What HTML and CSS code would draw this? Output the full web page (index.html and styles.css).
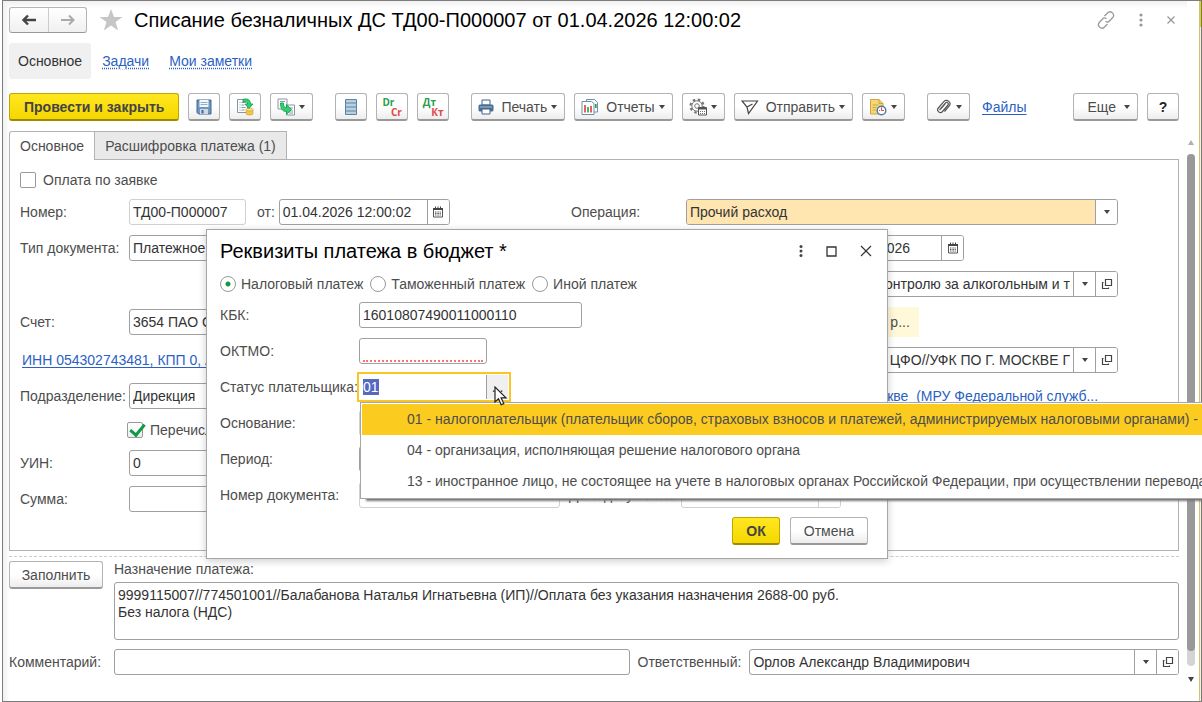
FILE: index.html
```html
<!DOCTYPE html>
<html lang="ru">
  <head>
    <meta charset="utf-8">
    <meta name="viewport" content="width=device-width, initial-scale=1">
    <title>Списание безналичных ДС</title>
    <link rel="stylesheet" href="styles.css">
  </head>

  <body>
    <!-- Shared icons -->
    <svg class="sprite" aria-hidden="true">
      <symbol id="calendar" viewBox="0 0 12 12">
        <path d="M1.500 2.500h9v8.500h-9z" fill="#fff" stroke="#555"/>
        <path d="M1 3h10" stroke="#444" stroke-width="2"/>
        <path d="M3.500 .5v2M6 .5v2M8.500 .5v2" stroke="#444"/>
        <path d="M3 6h6M3 7.500h6M3 9h6" stroke="#555" stroke-dasharray="1 .6"/>
      </symbol>
      <symbol id="open" viewBox="0 0 12 12">
        <path d="M4.500 1.500h6v6h-6zM2.500 4.500h-1v6h6v-1" fill="none" stroke="#444" stroke-width="1.200"/>
      </symbol>
    </svg>

    <div class="window">
      <div class="main">
        <!-- Title -->
        <header class="title-bar">
          <div class="history">
            <button type="button" aria-label="Назад">
              <svg width="16" height="12" viewBox="0 0 16 12"><path d="M15 6H3M7 1.500L2.500 6 7 10.500" fill="none" stroke="#444" stroke-width="2.400"/></svg>
            </button>
            <button type="button" aria-label="Вперед">
              <svg width="16" height="12" viewBox="0 0 16 12"><path d="M1 6h12M9 1.500L13.500 6 9 10.500" fill="none" stroke="#aaa" stroke-width="2"/></svg>
            </button>
          </div>
          <svg class="star" width="24" height="22" viewBox="0 0 24 22"><path d="M12 0l3 8h8.500l-7 5 2.700 8.500L12 16.500l-7.200 5L7.500 13l-7-5H9z" fill="#c4c6c8"/></svg>
          <h1>Списание безналичных ДС ТД00-П000007 от 01.04.2026 12:00:02</h1>
          <div class="title-tools">
            <button type="button" aria-label="Ссылка">
              <svg width="18" height="18" viewBox="0 0 18 18" fill="none" stroke="#999" stroke-width="1.300"><path d="M7.500 5l3-3a3.200 3.200 0 0 1 5 4.800L12.500 10a3 3 0 0 1-4 .3M10.500 13l-3 3a3.200 3.200 0 0 1-5-4.800L5.500 8a3 3 0 0 1 4-.3"/></svg>
            </button>
            <button type="button" aria-label="Меню">
              <svg width="4" height="14" viewBox="0 0 4 14" fill="#999"><circle cx="2" cy="2" r="1.600"/><circle cx="2" cy="7" r="1.600"/><circle cx="2" cy="12" r="1.600"/></svg>
            </button>
            <button type="button" aria-label="Закрыть">
              <svg width="8" height="8" viewBox="0 0 8 8"><path d="M.5.5l7 7M7.500.5l-7 7" stroke="#999" stroke-width="1.300"/></svg>
            </button>
          </div>
        </header>

        <nav class="sections">
          <a class="active" href="#main">Основное</a>
          <a href="#tasks">Задачи</a>
          <a href="#notes">Мои заметки</a>
        </nav>

        <!-- Command bar -->
        <div class="toolbar">
          <button type="button" class="btn primary">Провести и закрыть</button>
          <button type="button" class="btn icon" aria-label="Записать">
            <svg width="16" height="16" viewBox="0 0 16 16"><path d="M1 1h14v14H2.500L1 13.500z" fill="#6f97c2" stroke="#41668f"/><path d="M3.500 1h9v7h-9z" fill="#f4f7fa"/><path d="M4.500 3.500h7M4.500 5.500h7" stroke="#8fb0cc"/><path d="M4 10h8v5H4z" fill="#cfd9e2"/><path d="M5.500 11h2v3.500h-2z" fill="#41668f"/></svg>
          </button>
          <button type="button" class="btn icon" aria-label="Провести">
            <svg width="18" height="18" viewBox="0 0 18 18"><path d="M1.500 1.500h10v13h-10z" fill="#fff" stroke="#8995a0"/><path d="M3.500 4.500h1M5.500 4.500h4M3.500 7h1M5.500 7h3M3.500 9.500h1M5.500 9.500h4M3.500 12h1M5.500 12h3" stroke="#8995a0"/><path d="M10 11.500v4c0 2 7 2 7 0v-4" fill="#f3c647" stroke="#c99a2c" stroke-width=".6"/><ellipse cx="13.500" cy="11.500" rx="3.500" ry="1.500" fill="#fbe08a" stroke="#c99a2c" stroke-width=".6"/><path d="M7 1.500c4-1.500 7.500 0 7.500 4.500H17l-4 4.500L9 6h2.500C11.500 4 10 3.500 7 4z" fill="#2fd070" stroke="#129a48" stroke-width=".8"/></svg>
          </button>
          <button type="button" class="btn menu" aria-label="Создать на основании">
            <svg width="18" height="18" viewBox="0 0 18 18"><path d="M1 1h9v10H1z" fill="#fff" stroke="#8995a0"/><path d="M3 3.500h5M3 5.500h3" stroke="#8995a0"/><path d="M9.500 7h8v10h-8z" fill="#fff" stroke="#8995a0"/><path d="M12 10h4M13 13h3M12 15h4" stroke="#8995a0"/><path d="M3.500 5h3c0 3 .5 4.500 3 4.500V6.500l5 5-5 5v-3C5.500 13.500 3.500 11 3.500 5z" fill="#2fd070" stroke="#129a48" stroke-width=".8"/></svg>
          </button>
          <button type="button" class="btn icon group" aria-label="Движения документа">
            <svg width="12" height="16" viewBox="0 0 12 16"><path d="M.5.5h11v15H.5z" fill="#b9d0e0" stroke="#5c83a3"/><path d="M1 4h10M1 8h10M1 12h10" stroke="#5c83a3"/></svg>
          </button>
          <button type="button" class="btn icon pair" aria-label="Dr Cr"><span>Dr</span><span>Cr</span></button>
          <button type="button" class="btn icon pair" aria-label="Дт Кт"><span>Дт</span><span>Кт</span></button>
          <button type="button" class="btn menu group">
            <svg width="16" height="16" viewBox="0 0 16 16"><path d="M4 1h8v5H4z" fill="#fff" stroke="#3f6284"/><rect x=".5" y="5.500" width="15" height="7" rx="1.500" fill="#4a6f96"/><path d="M2 8h12" stroke="#a9c2d9"/><path d="M4 10h8v5H4z" fill="#fff" stroke="#3f6284"/></svg>
            <span>Печать</span>
          </button>
          <button type="button" class="btn menu">
            <svg width="18" height="16" viewBox="0 0 18 16"><path d="M5.500 .5h8l3 3V13h-11z" fill="#fff" stroke="#6f8ea8"/><path d="M1 2.500h9.500l2.500 2v11H1z" fill="#fff" stroke="#6f8ea8"/><path d="M4 6v7.500" stroke="#e03a3a" stroke-width="1.600"/><path d="M7 8v5.500M14.800 5v4" stroke="#1fa04a" stroke-width="1.600"/><path d="M10 7v6.500" stroke="#e03a3a" stroke-width="1.600"/></svg>
            <span>Отчеты</span>
          </button>
          <button type="button" class="btn menu" aria-label="Настройки">
            <svg width="18" height="18" viewBox="0 0 18 18" fill="none" stroke="#777"><circle cx="8" cy="8" r="6.500" stroke-width="2.200" stroke-dasharray="2.550 2.550"/><circle cx="8" cy="8" r="5.200" fill="#fff"/><circle cx="8" cy="8" r="2.300"/><path d="M9.500 9.500h8v7.500h-8z" fill="#fff" stroke="#555"/><path d="M9.500 10.500h8" stroke="#555" stroke-width="2"/><path d="M11 13.500h5.500M11 15.500h5.500" stroke-dasharray="1 1"/></svg>
          </button>
          <button type="button" class="btn menu">
            <svg width="18" height="16" viewBox="0 0 18 16" fill="none" stroke="#444" stroke-width="1.200"><path d="M1 2h15.500L7.500 14.500 6 8zM6 8l5.500-3"/></svg>
            <span>Отправить</span>
          </button>
          <button type="button" class="btn menu" aria-label="Напоминание">
            <svg width="18" height="18" viewBox="0 0 18 18"><path d="M1.500 1.500h8.500l4 4v10.500H1.500z" fill="#f6d778" stroke="#cfa53c"/><path d="M10 1.500v4h4M3.500 7h6M3.500 9.500h4M3.500 12h3" fill="none" stroke="#cfa53c"/><circle cx="12.500" cy="12.500" r="4.300" fill="#fff" stroke="#4a79a8" stroke-width="1.400"/><path d="M12.500 9.500v3h2.500M10 12.500h1" fill="none" stroke="#e04040"/></svg>
          </button>
          <button type="button" class="btn menu group" aria-label="Присоединить">
            <svg width="18" height="16" viewBox="0 0 18 16" fill="none" stroke="#555" stroke-width="1.200"><path d="M5.500 11l6-7a1.600 1.600 0 0 1 2.500 2L8.500 12.500A2.700 2.700 0 0 1 4.300 9l5.500-6.300a3.400 3.400 0 0 1 5.400 4.200L10.500 12.500M7 9.500l4-4.500"/></svg>
          </button>
          <a class="files" href="#files">Файлы</a>
          <button type="button" class="btn menu more">Еще</button>
          <button type="button" class="btn icon help">?</button>
        </div>

        <div class="tabs" role="tablist">
          <button type="button" role="tab" aria-selected="true" class="active">Основное</button>
          <button type="button" role="tab" aria-selected="false">Расшифровка платежа (1)</button>
        </div>

        <!-- Document fields -->
        <div class="panel">
          <label class="check"><input type="checkbox"> Оплата по заявке</label>

          <div class="form-grid">
            <div class="row">
              <label for="number">Номер:</label>
              <div class="field pale number"><input id="number" value="ТД00-П000007"></div>
              <label class="from" for="date">от:</label>
              <div class="field date"><input id="date" value="01.04.2026 12:00:02"><button type="button" aria-label="Календарь"><svg><use href="#calendar"/></svg></button></div>
            </div>
            <div class="row">
              <label for="operation">Операция:</label>
              <div class="field required grow">
                <select id="operation"><option>Прочий расход</option></select>
                <span class="arrow"></span>
              </div>
            </div>

            <div class="row">
              <label for="type">Тип документа:</label>
              <div class="field wide"><input id="type" value="Платежное поручение"></div>
            </div>
            <div class="row">
              <label for="in-date">Вх. дата:</label>
              <div class="field in-date"><input id="in-date" value="01.04.2026"><button type="button" aria-label="Календарь"><svg><use href="#calendar"/></svg></button></div>
            </div>

            <div class="row"></div>
            <div class="row">
              <label for="payee">Кому:</label>
              <div class="field grow clipped"><input id="payee" value="МРУ Федер. службы по контролю за алкогольным и т"><button type="button" class="arrow" aria-label="Выбрать"></button><button type="button" aria-label="Открыть"><svg><use href="#open"/></svg></button></div>
            </div>

            <div class="row">
              <label for="account">Счет:</label>
              <div class="field wide"><input id="account" value="3654 ПАО СБЕРБАНК"></div>
            </div>
            <div class="row tall">
              <span class="notice">Реквизиты платежа в бюджет р...</span>
            </div>

            <div class="row">
              <a class="link inn" href="#payer">ИНН 054302743481, КПП 0, АО</a>
            </div>
            <div class="row">
              <label for="payee-account">Счет:</label>
              <div class="field grow clipped"><input id="payee-account" value="ГУ БАНКА РОССИИ ПО ЦФО//УФК ПО Г. МОСКВЕ Г"><button type="button" class="arrow" aria-label="Выбрать"></button><button type="button" aria-label="Открыть"><svg><use href="#open"/></svg></button></div>
            </div>

            <div class="row">
              <label for="division">Подразделение:</label>
              <div class="field wide"><input id="division" value="Дирекция"></div>
            </div>
            <div class="row">
              <a class="link payee-link" href="#payee-info">УФК по г. Москве&nbsp; (МРУ Федеральной служб...</a>
            </div>

            <div class="row short">
              <label class="check ticked"><input type="checkbox" checked> Перечисление в бюджет</label>
            </div>
            <div class="row short"></div>

            <div class="row">
              <label for="uin">УИН:</label>
              <div class="field wide"><input id="uin" value="0"></div>
            </div>
            <div class="row"></div>

            <div class="row">
              <label for="sum">Сумма:</label>
              <div class="field wide"><input id="sum"></div>
            </div>
          </div>
        </div>

        <!-- Purpose and comment -->
        <div class="purpose">
          <button type="button" class="btn">Заполнить</button>
          <div class="purpose-text">
            <label for="purpose">Назначение платежа:</label>
            <textarea id="purpose">9999115007//774501001//Балабанова Наталья Игнатьевна (ИП)//Оплата без указания назначения 2688-00 руб.
Без налога (НДС)</textarea>
          </div>
        </div>
        <div class="footer">
          <label for="comment">Комментарий:</label>
          <div class="field"><input id="comment"></div>
          <label for="owner">Ответственный:</label>
          <div class="field"><input id="owner" value="Орлов Александр Владимирович"><button type="button" class="arrow" aria-label="Выбрать"></button><button type="button" aria-label="Открыть"><svg><use href="#open"/></svg></button></div>
        </div>
      </div>

      <div class="scroll">
        <span class="up"></span>
        <div class="track"><div class="thumb"></div></div>
        <span class="down"></span>
      </div>
      <div class="edge"></div>

      <!-- Budget payment dialog -->
      <form class="dialog" role="dialog" aria-labelledby="dialog-title">
        <header>
          <h2 id="dialog-title">Реквизиты платежа в бюджет *</h2>
          <button type="button" aria-label="Меню">
            <svg width="4" height="12" viewBox="0 0 4 12" fill="#444"><circle cx="2" cy="1.500" r="1.500"/><circle cx="2" cy="6" r="1.500"/><circle cx="2" cy="10.500" r="1.500"/></svg>
          </button>
          <button type="button" aria-label="Развернуть">
            <svg width="11" height="11" viewBox="0 0 11 11"><path d="M1 1h9v9H1z" fill="none" stroke="#333" stroke-width="1.300"/></svg>
          </button>
          <button type="button" aria-label="Закрыть">
            <svg width="12" height="12" viewBox="0 0 12 12"><path d="M1 1l10 10M11 1L1 11" stroke="#333" stroke-width="1.200"/></svg>
          </button>
        </header>
        <div class="radios">
          <label><input type="radio" name="kind" checked> Налоговый платеж</label>
          <label><input type="radio" name="kind"> Таможенный платеж</label>
          <label><input type="radio" name="kind"> Иной платеж</label>
        </div>
        <div class="dialog-rows">
          <div class="row"><label for="kbk">КБК:</label><div class="field kbk"><input id="kbk" value="16010807490011000110"></div></div>
          <div class="row"><label for="oktmo">ОКТМО:</label><div class="field oktmo"><input id="oktmo"></div></div>
          <div class="row"><label for="status">Статус плательщика:</label><div class="field status"><input id="status" value="01" autofocus onfocus="this.select()"><button type="button" aria-label="Выбрать">...</button></div></div>
          <div class="row"><label for="basis">Основание:</label><div class="field pale basis"><input id="basis"></div></div>
          <div class="row"><label for="period">Период:</label><div class="field basis"><input id="period"></div></div>
          <div class="row">
            <label for="doc-number">Номер документа:</label><div class="field pale basis"><input id="doc-number"></div>
            <label class="doc-date-label" for="doc-date">Дата документа:</label><div class="field pale doc-date"><input id="doc-date"><button type="button" aria-label="Календарь"></button></div>
          </div>
        </div>
        <div class="dialog-buttons">
          <button type="button" class="btn primary">ОК</button>
          <button type="button" class="btn">Отмена</button>
        </div>
      </form>

      <ul class="suggest" role="listbox" aria-label="Статус плательщика">
        <li role="option" aria-selected="true" class="current">01 - налогоплательщик (плательщик сборов, страховых взносов и платежей, администрируемых налоговыми органами) - юри</li>
        <li role="option" aria-selected="false">04 - организация, исполняющая решение налогового органа</li>
        <li role="option" aria-selected="false">13 - иностранное лицо, не состоящее на учете в налоговых органах Российской Федерации, при осуществлении перевода д</li>
      </ul>

      <svg class="cursor" width="14" height="20" viewBox="0 0 14 20"><path d="M1 1v15l3.500-3.200 2.700 6 2.600-1.200-2.700-5.800H12z" fill="#fff" stroke="#222" stroke-width="1.200"/></svg>
    </div>
  </body>
</html>
```
FILE: styles.css
```css
* {
    box-sizing: border-box;
}

body {
    margin: 0;
    background: #fff;
    color: #4d4d4d;
    font-family: "Liberation Sans", Arial, sans-serif;
    font-size: 14px;
    line-height: 16px;
    overflow: hidden;
}

button, input, select, textarea {
    font: inherit;
    color: inherit;
}

button {
    margin: 0;
    padding: 0;
    border: none;
    background: none;
    cursor: pointer;
}

.sprite {
    position: absolute;
    width: 0;
    height: 0;
}

.window {
    position: relative;
    display: flex;
    min-height: 100vh;
    margin-left: 2px;
    border: 1px solid #7d7d7d;
    border-right: none;
    overflow: hidden;
}

.main {
    flex: 1;
    min-width: 0;
    padding: 5px 8px 0 6px;
    box-shadow: inset 4px 4px 4px #f2f2f2;
}

/* Title */
.title-bar {
    display: flex;
    align-items: center;
    height: 27px;
}

.history {
    display: flex;
    border: 1px solid #b5b5b5;
    border-bottom-color: #999;
    border-radius: 3px;
    background: linear-gradient(#fff, #f0f0f0);
}

.history button {
    display: flex;
    align-items: center;
    justify-content: center;
    width: 38px;
    height: 24px;
}

.history button + button {
    border-left: 1px solid #ccc;
}

.star {
    margin: 0 11px 0 12px;
}

h1 {
    flex: 1;
    margin: 0;
    color: #000;
    font-size: 20px;
    font-weight: normal;
    line-height: 24px;
    white-space: nowrap;
}

.title-tools {
    display: flex;
    align-items: center;
    gap: 24px;
    padding-right: 4px;
}

.title-tools button {
    display: flex;
}

/* Sections */
.sections {
    display: flex;
    gap: 20px;
    align-items: center;
    margin-top: 10px;
}

.sections a, .link {
    color: #2b5fc4;
    text-decoration: underline;
    text-underline-offset: 2px;
}

.sections a {
    text-decoration-style: dotted;
}

.sections .active {
    margin-right: -9px;
    padding: 10px 9px;
    border-radius: 3px;
    background: #f0f0f0;
    color: #333;
    text-decoration: none;
}

/* Buttons */
.btn {
    display: flex;
    align-items: center;
    justify-content: center;
    gap: 4px;
    height: 28px;
    padding: 0 14px;
    border: 1px solid #b3b3b3;
    border-bottom: 2px solid #999;
    border-radius: 3px;
    background: linear-gradient(#fff 50%, #ededed);
    white-space: nowrap;
}

.btn.primary {
    border-color: #c2a600;
    border-bottom-color: #9e8900;
    background: linear-gradient(#ffe720, #f5d800);
    color: #444;
    font-weight: bold;
}

.toolbar {
    display: flex;
    align-items: center;
    gap: 9px;
    margin-top: 14px;
}

.btn.icon {
    width: 32px;
    padding: 0;
}

.btn.menu {
    padding: 0 7px 0 6px;
}

.btn.menu span {
    margin-left: 3px;
}

.btn.menu::after, .arrow::after {
    content: "";
    border: 3px solid transparent;
    border-top: 4px solid #444;
    border-bottom: none;
}

/* starts a new group of buttons */
.btn.group {
    margin-left: 13px;
}

.pair {
    flex-direction: column;
    color: #2a9d50;
    font-family: "Open Sans", sans-serif;
    font-size: 10px;
    font-weight: bold;
    line-height: 10px;
}

.btn.pair {
    gap: 0;
}

.pair span:first-child {
    margin-right: 8px;
}

.pair span:last-child {
    margin-left: 8px;
    color: #e04848;
}

.files {
    margin-left: 3px;
    color: #2b5fc4;
    text-underline-offset: 2px;
}

.btn.more {
    gap: 8px;
    margin-left: auto;
    padding-left: 14px;
}

.help {
    color: #222;
    font-weight: bold;
}

/* Tabs */
.tabs {
    display: flex;
    margin-top: 10px;
}

.tabs button {
    height: 28px;
    padding: 0 10px;
    border: 1px solid #b3b3b3;
    border-bottom: none;
    border-left: none;
    background: #e9e9e9;
}

.tabs .active {
    position: relative;
    z-index: 1;
    height: 29px;
    margin-bottom: -1px;
    border-left: 1px solid #b3b3b3;
    border-radius: 3px 0 0 0;
    background: #fff;
}

.panel {
    padding: 12px 60px 38px 10px;
    border: 1px solid #b3b3b3;
}

.check {
    display: flex;
    align-items: center;
    gap: 7px;
    height: 16px;
}

.check input {
    appearance: none;
    width: 16px;
    height: 16px;
    margin: 0;
    border: 1px solid #999;
    border-radius: 2px;
    background: #fff;
}

.ticked input {
    background: linear-gradient(#fff, #eee);
}

.check input:checked::before {
    content: "";
    display: block;
    width: 6px;
    height: 12px;
    margin: -2px 0 0 5px;
    border: solid #109a48;
    border-width: 0 3px 3px 0;
    transform: rotate(40deg);
}

.form-grid {
    display: grid;
    grid-template-columns: 1fr 1fr;
    gap: 10px 4px;
    align-items: center;
    margin-top: 11px;
}

.row {
    display: flex;
    align-items: center;
    height: 26px;
    min-width: 0;
    white-space: nowrap;
}

.row.tall {
    height: 30px;
}

.row.short {
    height: 21px;
}

.row > label:first-child {
    flex: none;
    width: 109px;
}

.form-grid > .row:nth-child(even) > label:first-child {
    width: 115px;
}

.form-grid > .row > .ticked:first-child {
    width: auto;
    margin-left: 107px;
}

/* Input boxes */
.field {
    display: flex;
    height: 26px;
    min-width: 0;
    border: 1px solid #a0a0a0;
    border-radius: 3px;
    background: #fff;
    color: #333;
    overflow: hidden;
}

.field.pale {
    border-color: #d0d0d0;
}

.field input, .field select {
    appearance: none;
    flex: 1;
    width: 0;
    min-width: 0;
    padding: 0 3px;
    border: none;
    outline: none;
    background: none;
}

.field button, .field .arrow {
    display: flex;
    align-items: center;
    justify-content: center;
    flex: none;
    width: 22px;
    border-left: 1px solid #a0a0a0;
    background: #fff;
}

.field.pale button {
    border-color: #d0d0d0;
}

.field button svg {
    width: 12px;
    height: 12px;
}

.grow {
    flex: 1;
}

.clipped input {
    text-align: right;
}

.number {
    width: 117px;
}

.from {
    margin: 0 4px 0 11px;
}

.date {
    width: 171px;
}

.in-date {
    width: 278px;
}

.in-date input {
    text-indent: 150px;
}

.wide {
    width: 320px;
}

.required select {
    background: #ffe6b0;
}

.notice {
    margin-left: 115px;
    padding: 7px 9px;
    background: #fff9d9;
}

.payee-link {
    margin-left: 228px;
}

.inn {
    margin-left: 2px;
}

/* Bottom part */
.purpose {
    display: flex;
    align-items: flex-start;
    gap: 11px;
    margin-top: 5px;
    padding-top: 4px;
    border-top: 1px dashed #ccc;
}

.purpose .btn {
    width: 94px;
}

.purpose-text {
    display: flex;
    flex: 1;
    flex-direction: column;
    gap: 5px;
}

textarea {
    height: 58px;
    padding: 4px 3px;
    border: 1px solid #a0a0a0;
    border-radius: 3px;
    color: #333;
    line-height: 17px;
    resize: none;
}

.footer {
    display: grid;
    grid-template-columns: 97px 6fr auto 5fr;
    gap: 8px;
    align-items: center;
    margin-top: 9px;
}

/* Scrollbar */
.scroll {
    display: flex;
    flex-direction: column;
    align-items: center;
    gap: 9px;
    width: 8px;
    margin: 139px 4px 19px 0;
}

.up, .down {
    border: 3px solid transparent;
}

.up {
    border-bottom: 5px solid #b0b0b0;
    border-top: none;
}

.down {
    border-top: 5px solid #444;
    border-bottom: none;
}

.track {
    flex: 1;
    width: 8px;
    margin-bottom: 2px;
    border-radius: 4px;
    background: #d4d4d4;
}

.thumb {
    height: 97%;
    border-radius: 4px;
    background: #999;
}

.edge {
    width: 3px;
    border-left: 1px solid #d2c173;
    border-right: 1px solid #777;
    background: linear-gradient(#e2d600 26px, #f6f2dc 26px);
}

/* Dialog */
.dialog {
    position: absolute;
    top: 228px;
    left: 203px;
    width: 682px;
    padding: 9px 13px 13px;
    border: 1px solid #a6a6a6;
    background: #fff;
    box-shadow: 0 2px 8px rgba(0, 0, 0, 0.2);
}

.dialog header {
    display: flex;
    align-items: center;
    gap: 23px;
    padding-right: 2px;
}

h2 {
    flex: 1;
    margin: 0;
    color: #000;
    font-size: 20px;
    font-weight: normal;
    line-height: 24px;
}

.dialog header button {
    display: flex;
}

.radios {
    display: flex;
    gap: 7px;
    margin-top: 13px;
}

.radios label {
    display: flex;
    align-items: center;
    gap: 5px;
}

.radios input {
    appearance: none;
    width: 16px;
    height: 16px;
    margin: 0;
    border: 1px solid #999;
    border-radius: 50%;
}

.radios input:checked {
    background: radial-gradient(circle, #109a48 2px, transparent 3px);
}

.dialog-rows {
    display: flex;
    flex-direction: column;
    gap: 10px;
    margin-top: 10px;
}

.dialog .row > label:first-child {
    width: 139px;
}

.kbk {
    width: 223px;
}

.oktmo {
    width: 128px;
}

.oktmo input {
    height: 23px;
    margin: 0 3px;
    border-bottom: 2px dotted #ff7070;
}

.status {
    width: 150px;
    border-color: transparent;
    outline: 2px solid #f9c623;
    border-radius: 0;
}

.status button {
    background: #f0f0f0;
}

.status input::selection {
    background: #5468c4;
    color: #fff;
}

.basis {
    width: 201px;
}

.doc-date-label {
    width: 112px;
    margin-left: 9px;
}

.doc-date {
    width: 160px;
}

.dialog-buttons {
    display: flex;
    justify-content: flex-end;
    gap: 10px;
    margin-top: 9px;
    padding-right: 6px;
}

.dialog-buttons .btn {
    padding: 0 13px;
}

/* Suggestion list */
.suggest {
    position: absolute;
    top: 401px;
    left: 357px;
    right: 0;
    margin: 0;
    padding: 1px 0 1px 1px;
    border: 1px solid #a6a6a6;
    border-right: none;
    background: #fff;
    box-shadow: 6px 2px 2px #777;
    list-style: none;
    overflow: hidden;
}

.suggest li {
    height: 31px;
    padding-left: 45px;
    line-height: 31px;
    white-space: nowrap;
}

.suggest .current {
    background: #fbcb20;
}

.cursor {
    position: absolute;
    top: 385px;
    left: 491px;
}
```
